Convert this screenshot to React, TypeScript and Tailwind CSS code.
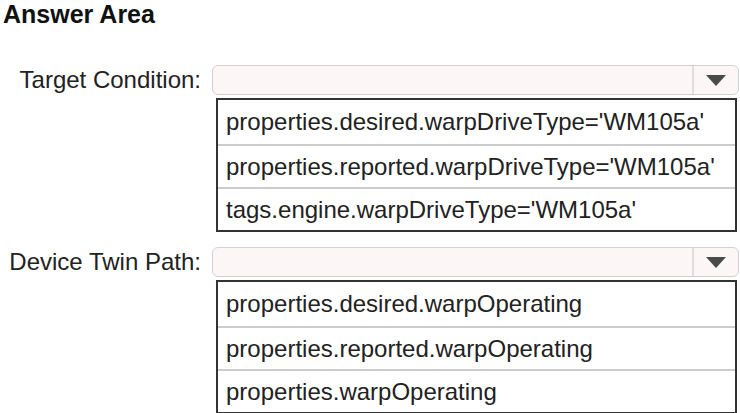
import React from "react";

function Dropdown() {
  return (
    <div className="flex-1 h-[30px] rounded-[6px] border border-[#d2d2d2] bg-[#fdf6f6] flex items-stretch">
      <div className="flex-1" />
      <div className="w-[46px] border-l-2 border-[#dedede] flex items-center justify-center">
        <svg width="20" height="11" viewBox="0 0 20 11">
          <polygon points="0,0 20,0 10,11" fill="#4a4a4a" />
        </svg>
      </div>
    </div>
  );
}

function OptionList({ items }: { items: string[] }) {
  return (
    <div className="ml-[216px] mr-[3px] mt-[3px] border-2 border-[#333333] bg-white">
      {items.map((t, i) => (
        <div
          key={i}
          className={
            "flex items-center pl-[8px] text-[24px] text-[#222222] leading-none whitespace-nowrap " +
            (i === 0 ? "h-[44px]" : "border-t-2 border-[#cccccc] h-[43px]")
          }
        >
          {t}
        </div>
      ))}
    </div>
  );
}

function Field({ label, items }: { label: string; items: string[] }) {
  return (
    <div className="flex flex-col">
      <div className="flex items-center">
        <div className="w-[202px] text-right text-[24px] text-[#222222] leading-[30px] pr-[1px] whitespace-nowrap">
          {label}
        </div>
        <div className="w-[10px]" />
        <div className="flex-1 flex mr-[1px]">
          <Dropdown />
        </div>
      </div>
      <OptionList items={items} />
    </div>
  );
}

export default function App() {
  return (
    <div className="w-[740px] h-[413px] bg-white overflow-hidden font-['Liberation_Sans',Arial,sans-serif]">
      <div className="pl-[3px] text-[25px] leading-[28px] font-bold text-[#111111]">Answer Area</div>
      <div className="mt-[37px]">
        <Field
          label="Target Condition:"
          items={[
            "properties.desired.warpDriveType='WM105a'",
            "properties.reported.warpDriveType='WM105a'",
            "tags.engine.warpDriveType='WM105a'",
          ]}
        />
      </div>
      <div className="mt-[15px]">
        <Field
          label="Device Twin Path:"
          items={[
            "properties.desired.warpOperating",
            "properties.reported.warpOperating",
            "properties.warpOperating",
          ]}
        />
      </div>
    </div>
  );
}
